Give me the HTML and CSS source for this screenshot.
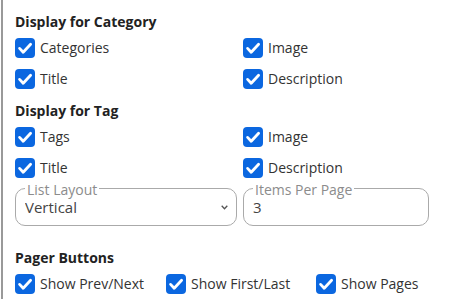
FILE: index.html
```html
<!DOCTYPE html>
<html lang="en">
<head>
  <meta charset="UTF-8">
  <title>Display Settings</title>
  <link rel="stylesheet" href="styles.css">
</head>
<body>
  <svg class="defs" width="0" height="0">
    <symbol id="chk" viewBox="0 0 20 20">
      <rect width="20" height="20" rx="4" fill="#0b67e0"/>
      <path d="M4.6 10.4l3.6 3.9L15.6 6.2" fill="none" stroke="#fff" stroke-width="2.8" stroke-linecap="round" stroke-linejoin="round"/>
    </symbol>
  </svg>

  <div class="panel">
    <h3 class="section-title">Display for Category</h3>
    <div class="check-grid">
      <label class="check"><svg class="box"><use href="#chk"/></svg>Categories</label>
      <label class="check"><svg class="box"><use href="#chk"/></svg>Image</label>
      <label class="check"><svg class="box"><use href="#chk"/></svg>Title</label>
      <label class="check"><svg class="box"><use href="#chk"/></svg>Description</label>
    </div>

    <h3 class="section-title">Display for Tag</h3>
    <div class="check-grid">
      <label class="check"><svg class="box"><use href="#chk"/></svg>Tags</label>
      <label class="check"><svg class="box"><use href="#chk"/></svg>Image</label>
      <label class="check"><svg class="box"><use href="#chk"/></svg>Title</label>
      <label class="check"><svg class="box"><use href="#chk"/></svg>Description</label>
    </div>

    <div class="fields">
      <fieldset class="field">
        <legend>List Layout</legend>
        <div class="field-row">
          <select>
            <option>Vertical</option>
            <option>Horizontal</option>
          </select>
          <svg class="chevron" width="7" height="5" viewBox="0 0 7 5"><path d="M0.7 0.8L3.5 3.8L6.3 0.8" fill="none" stroke="#555" stroke-width="1.3"/></svg>
        </div>
      </fieldset>
      <fieldset class="field">
        <legend>Items Per Page</legend>
        <div class="field-row">
          <input type="text" value="3">
        </div>
      </fieldset>
    </div>

    <h3 class="section-title pager-title">Pager Buttons</h3>
    <div class="pager-grid">
      <label class="check"><svg class="box"><use href="#chk"/></svg>Show Prev/Next</label>
      <label class="check"><svg class="box"><use href="#chk"/></svg>Show First/Last</label>
      <label class="check"><svg class="box"><use href="#chk"/></svg>Show Pages</label>
    </div>
  </div>
</body>
</html>
```

FILE: styles.css
```css
body {
  margin: 0;
  font-family: 'Open Sans', sans-serif;
  color: #333;
  background: #fff;
}
.defs {
  position: absolute;
}
.panel {
  margin-left: 1px;
  border-left: 2px solid #999;
  padding: 5px 0 0 12px;
  min-height: 299px;
  box-sizing: border-box;
}
.section-title {
  margin: 6px 0 0;
  font-size: 14px;
  line-height: 21px;
  font-weight: 700;
  color: #222;
}
.check-grid {
  display: grid;
  grid-template-columns: 228px 228px;
  grid-auto-rows: 31px;
}
.pager-grid {
  display: grid;
  grid-template-columns: 151px 150px auto;
  grid-auto-rows: 31px;
}
.check {
  display: flex;
  align-items: center;
  gap: 5px;
  font-size: 14px;
  line-height: 20px;
  white-space: nowrap;
}
.box {
  width: 20px;
  height: 20px;
  flex: none;
}
.fields {
  display: grid;
  grid-template-columns: 222px 186px;
  column-gap: 6px;
}
.field {
  margin: 0;
  padding: 3px 8px 8px 9px;
  border: 1px solid #aaa;
  border-radius: 10px;
  min-width: 0;
}
.field legend {
  padding: 3px 2px 0;
  font-size: 14px;
  line-height: 8px;
  color: #8c8c8c;
}
.field-row {
  display: flex;
  align-items: center;
}
.field select, .field input {
  flex: 1;
  min-width: 0;
  height: 20px;
  margin: 0;
  padding: 0;
  border: 0;
  font-family: 'Open Sans', sans-serif;
  font-size: 15px;
  line-height: 20px;
  color: #444;
  background: transparent;
  appearance: none;
  outline: none;
}
.chevron {
  flex: none;
}
.pager-title {
  margin-top: 21px;
}
```
